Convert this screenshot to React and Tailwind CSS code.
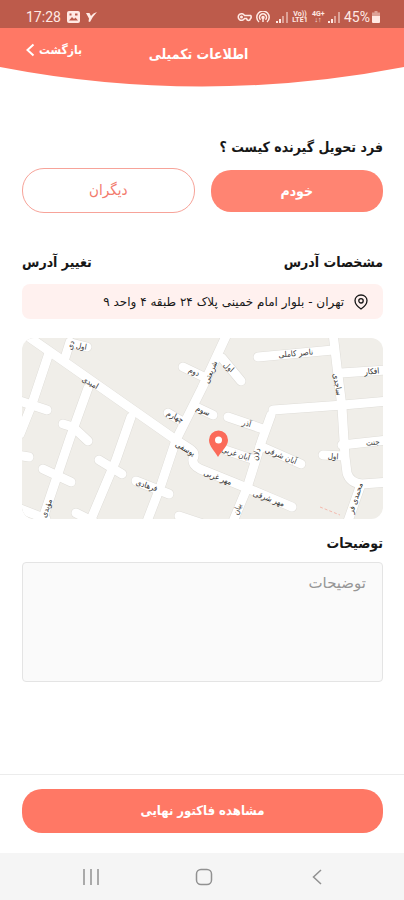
import React, { useState } from 'react';

const roads = [
    'M4 -3 L37 20 L154 102 L168 111 Q174 115 171 121 Q170 127 178 131 L225 150 L270 169',
    'M27 15 L10 66 L-2 96',
    'M-5 62 L25 72',
    'M-5 117 L7 119',
    'M66 50 L48 100 L19 186',
    'M41 86 L51 89 L66 103',
    'M21 131 L49 144',
    'M109 79 L94 122 L67 186',
    'M77 122 L100 136',
    'M205 -4 L180 50 L154 102 L139 147 L124 186',
    'M114 143 L147 156',
    'M146 75 L161 84',
    'M161 29 L184 40',
    'M174 69 L191 77',
    'M48 4 L43 20',
    'M49 5 L65 9',
    'M54 175 L72 184',
    'M157 178 L184 187',
    'M-4 170 L24 181',
    'M200 20 L219 43',
    'M236 19 L311 12',
    'M311 -5 L315 29 L320 69 L323 119 L325 135 Q328 145 340 146 L367 144',
    'M319 35 L366 32',
    'M320 107 L366 102',
    'M251 72 L321 67 L366 63',
    'M249 77 L240 102 L225 150 L210 186',
    'M206 79 L241 91',
    'M238 108 L279 126',
    'M203 112 L230 121',
    'M301 117 L322 118',
    'M338 149 L325 186',
];

const streets = [
    { name: 'اول', x: 59, y: 11, angle: 10 },
    { name: 'دی', x: 51, y: 8, angle: -70 },
    { name: 'امیدی', x: 67, y: 47, angle: 30 },
    { name: 'دوم', x: 171, y: 36, angle: 24 },
    { name: 'چهارم', x: 152, y: 81, angle: 26 },
    { name: 'سوم', x: 180, y: 75, angle: 24 },
    { name: 'یوسفی', x: 162, y: 113, angle: 30 },
    { name: 'فرهادی', x: 124, y: 150, angle: 18 },
    { name: 'مؤیدی', x: 27, y: 171, angle: -70 },
    { name: 'شریعتی', x: 191, y: 35, angle: -68 },
    { name: 'اول', x: 205, y: 31, angle: 42 },
    { name: 'ناصر کاملی', x: 274, y: 18, angle: -5 },
    { name: 'ساجدی', x: 313, y: 47, angle: 80 },
    { name: 'افکار', x: 350, y: 36, angle: -5 },
    { name: 'آذر', x: 224, y: 88, angle: 16 },
    { name: 'آبان غربی', x: 213, y: 118, angle: 18 },
    { name: 'آبان شرقی', x: 258, y: 120, angle: 22 },
    { name: 'دلان', x: 237, y: 117, angle: -75 },
    { name: 'اول', x: 311, y: 121, angle: 4 },
    { name: 'جنت', x: 351, y: 107, angle: -6 },
    { name: 'مهر غربی', x: 195, y: 142, angle: 20 },
    { name: 'مهر شرقی', x: 246, y: 163, angle: 20 },
    { name: 'بیان', x: 218, y: 172, angle: -70 },
    { name: 'محمدی فر', x: 336, y: 161, angle: -72 },
];

const Signal = () => (
    <svg viewBox="0 0 12 12" className="h-3 w-3 shrink-0" fill="currentColor">
        <path d="M0 10h2v2H0zM3 8h2v4H3z" />
        <path d="M6 5h2v7H6zM10 1h2v11h-2z" opacity=".5" />
    </svg>
);

const StatusBar = () => (
    <div dir="ltr" className="flex h-7 items-center justify-between bg-[#bd5b4b] pt-1.5 pr-6 pl-[26px] font-['Roboto',sans-serif] text-[#ffe9e4]">
        <div className="flex items-center gap-1.5">
            <span className="text-sm leading-4">17:28</span>
            <svg viewBox="0 0 13 12" className="h-3 w-[13px]">
                <rect width="13" height="12" rx="2" fill="currentColor" />
                <path d="M2 9.5l3-3.5 2 2 1.5-1.5L11 9.5z" fill="#bd5b4b" />
                <path d="M2.5 2.5h2v2h-2zM8 2.5h2.5v2H8z" fill="#bd5b4b" />
            </svg>
            <svg viewBox="0 0 11 12" className="h-3 w-[11px]" fill="currentColor">
                <path d="M0 2H3.500L5 5Q7 2 11 1Q7 5 4 11L2.500 10.500L3 7.500Z" />
            </svg>
        </div>
        <div className="flex items-center gap-1">
            <svg viewBox="0 0 15 10" className="h-2.5 w-[15px]" fill="none" stroke="currentColor" strokeWidth="1.6">
                <path d="M7.500 3.500A3.300 3.300 0 1 0 7.500 6.500H9.500Q10 8.500 11.500 8.500T13.500 6.500Q14.200 6.200 14.200 5T13.500 3.500Z" />
                <circle cx="4.500" cy="5" r=".7" />
            </svg>
            <svg viewBox="0 0 14 12" className="mr-0.5 h-3 w-3.5" fill="none" stroke="currentColor" strokeWidth="1.5">
                <path d="M3 11A6.200 6.200 0 1 1 11 11M4.500 8.800A3.500 3.500 0 1 1 9.500 8.800" />
                <circle cx="7" cy="6.500" r="1" fill="currentColor" />
                <path d="M7 7v4" />
            </svg>
            <Signal />
            <span className="w-4 text-center text-[7px] leading-[6px] font-bold">Vo)) LTE1</span>
            <span className="w-3 text-center text-[7px] leading-[6px] font-bold">4G+ ↓↑</span>
            <Signal />
            <div className="flex items-center gap-0.5">
                <span className="text-sm leading-4">45%</span>
                <svg viewBox="0 0 8 12" className="h-3 w-2" fill="currentColor">
                    <path d="M2.500 0h3v1.500H8V5H0V1.500h2.500z" opacity=".5" />
                    <path d="M0 5h8v6q0 1-1 1H1q-1 0-1-1z" />
                </svg>
            </div>
        </div>
    </div>
);

const Header = () => (
    <header>
        <div className="grid h-[39px] grid-cols-[1fr_2fr_1fr] items-start bg-[#ff7865] pr-8 pl-[25px] text-white">
            <span></span>
            <h1 className="pt-3.5 text-center text-sm leading-6 font-bold whitespace-nowrap">اطلاعات تکمیلی</h1>
            <a href="#back" className="flex items-center justify-end gap-1 pt-2.5 text-xs leading-6 font-bold">
                بازگشت
                <svg viewBox="0 0 10 14" className="h-3.5 w-2.5" fill="none" stroke="currentColor" strokeWidth="2">
                    <path d="M8.500 1.500L2.500 7l6 5.500" />
                </svg>
            </a>
        </div>
        <svg viewBox="0 0 404 20" preserveAspectRatio="none" className="block h-5 w-full" fill="#ff7865">
            <path d="M0 0H404Q202 39 0 0Z" />
        </svg>
    </header>
);

const AddressMap = () => (
    <svg
        viewBox="0 0 361 181"
        preserveAspectRatio="xMidYMid slice"
        className="mt-[19px] block w-full rounded-xl bg-[#f0eee9]"
        role="img"
        aria-label="نقشه"
    >
        {/* road edges first, white fill on top */}
        <g fill="none" stroke="#dfddd8" strokeWidth="10" strokeLinecap="round" strokeLinejoin="round">
            {roads.map((d) => <path key={d} d={d} />)}
        </g>
        <g fill="none" stroke="#fff" strokeWidth="9" strokeLinecap="round" strokeLinejoin="round">
            {roads.map((d) => <path key={d} d={d} />)}
        </g>
        <path d="M298 169L318 177" stroke="#f3b9ad" strokeDasharray="3 2" />
        <g fill="#333" fontSize="8" textAnchor="middle">
            {streets.map(({ name, x, y, angle }) => (
                <text key={`${name}-${x}`} x={x} y={y} transform={`rotate(${angle} ${x} ${y})`}>{name}</text>
            ))}
        </g>
        <path d="M196 119C192 112 187 108 187 102A9.500 9.500 0 0 1 206 102C206 108 200 112 196 119Z" fill="#fb6a59" />
        <circle cx="196.500" cy="102" r="3.500" fill="#fff" />
    </svg>
);

const NavBar = () => (
    <nav dir="ltr" className="grid h-[47px] grid-cols-3 items-center justify-items-center bg-[#f5f5f5] pr-[30px] pl-[34px] text-[#919191]">
        <button aria-label="Recents">
            <svg viewBox="0 0 16 16" className="h-4 w-4" fill="none" stroke="currentColor" strokeWidth="1.5">
                <path d="M1 0v16M8 0v16M15 0v16" />
            </svg>
        </button>
        <button aria-label="Home">
            <svg viewBox="0 0 18 18" className="h-[18px] w-[18px]" fill="none" stroke="currentColor" strokeWidth="1.5">
                <rect x="1.500" y="1.500" width="15" height="15" rx="4.500" />
            </svg>
        </button>
        <button aria-label="Back">
            <svg viewBox="0 0 10 16" className="h-4 w-2.5" fill="none" stroke="currentColor" strokeWidth="1.5">
                <path d="M9 1L1.500 8L9 15" />
            </svg>
        </button>
    </nav>
);

const App = () => {
    const [note, setNote] = useState('');

    return (
        <div dir="rtl" lang="fa" className="flex min-h-screen flex-col bg-white font-['DejaVu_Sans_Condensed','DejaVu_Sans',sans-serif] text-[#171717]">
            <StatusBar />
            <Header />

            <main className="flex-1 pt-12 pr-[21px] pb-6 pl-[22px]">
                {/* Receiver */}
                <h2 className="text-sm leading-6 font-bold">فرد تحویل گیرنده کیست ؟</h2>
                <div className="mt-[9px] grid grid-cols-2 items-center gap-4">
                    <button className="h-[42px] rounded-[20px] bg-[#ff8472] text-sm font-bold text-white">خودم</button>
                    <button className="h-[45px] rounded-[22px] border border-[#f7a399] text-[15px] text-[#f27a6c]">دیگران</button>
                </div>

                {/* Address */}
                <div className="mt-[37px] flex items-center justify-between text-sm leading-6 font-bold">
                    <h2>مشخصات آدرس</h2>
                    <a href="#address">تغییر آدرس</a>
                </div>
                <div className="mt-2.5 flex h-[35px] items-center gap-2.5 rounded-lg bg-[#fff1ef] px-[15px]">
                    <svg viewBox="0 0 14 16" className="h-4 w-3.5 shrink-0" fill="none" stroke="currentColor" strokeWidth="1.3">
                        <path d="M7 15C4 13 1 10.500 1 6.500C1 3.500 3.500 1 7 1S13 3.500 13 6.500C13 10.500 10 13 7 15Z" />
                        <circle cx="7" cy="6.800" r="2.200" />
                    </svg>
                    <p className="font-['DejaVu_Sans',sans-serif] text-xs whitespace-nowrap">تهران - بلوار امام خمینی پلاک ۲۴ طبقه ۴ واحد ۹</p>
                </div>
                <AddressMap />

                {/* Notes */}
                <label htmlFor="note" className="mt-3 block text-sm leading-6 font-bold">توضیحات</label>
                <textarea
                    id="note"
                    value={note}
                    onChange={(e) => setNote(e.target.value)}
                    placeholder="توضیحات"
                    className="mt-[7px] block h-[120px] w-full resize-none rounded border border-[#e4e4e4] bg-[#fafafa] px-4 py-2 font-['DejaVu_Sans',sans-serif] text-[15px] leading-6 placeholder:text-[#969696]"
                />
            </main>

            <footer className="border-t border-[#ececec] pt-3.5 pr-[21px] pb-5 pl-[22px]">
                <button className="h-11 w-full rounded-[20px] bg-[#ff7865] text-[13px] font-bold text-white">مشاهده فاکتور نهایی</button>
            </footer>
            <NavBar />
        </div>
    );
};

export default App;
